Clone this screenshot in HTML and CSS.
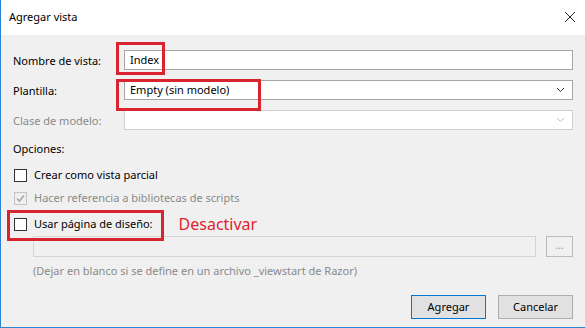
FILE: index.html
```html
<!DOCTYPE html>
<html lang="es">
<head>
    <meta charset="UTF-8">
    <title>Agregar vista</title>
    <link rel="stylesheet" href="styles.css">
</head>
<body>
    <div class="dialog">
        <div class="titlebar">
            <span class="title">Agregar vista</span>
            <svg class="close" width="12" height="12" viewBox="0 0 12 12">
                <path d="M1 1 L11 11 M11 1 L1 11" stroke="#222" stroke-width="1" fill="none"/>
            </svg>
        </div>

        <div class="content">
            <div class="field">
                <span class="label">Nombre de vista:</span>
                <div class="textbox">Index</div>
            </div>
            <div class="field">
                <span class="label">Plantilla:</span>
                <div class="combo">
                    <span>Empty (sin modelo)</span>
                    <svg class="chevron" width="9" height="6" viewBox="0 0 9 6"><path d="M1 1 L4.5 4.5 L8 1" stroke="#333" fill="none"/></svg>
                </div>
            </div>
            <div class="field disabled">
                <span class="label">Clase de modelo:</span>
                <div class="combo">
                    <span></span>
                    <svg class="chevron" width="9" height="6" viewBox="0 0 9 6"><path d="M1 1 L4.5 4.5 L8 1" stroke="#bbb" fill="none"/></svg>
                </div>
            </div>

            <div class="section">Opciones:</div>

            <div class="check first">
                <span class="box"></span>
                <span>Crear como vista parcial</span>
            </div>
            <div class="check disabled second">
                <span class="box">
                    <svg width="11" height="11" viewBox="0 0 11 11"><path d="M2 5.5 L4.5 8 L9 2.5" stroke="#a8a8a8" stroke-width="1.6" fill="none"/></svg>
                </span>
                <span>Hacer referencia a bibliotecas de scripts</span>
            </div>
            <div class="check third">
                <span class="box"></span>
                <span>Usar página de diseño:</span>
                <span class="note">Desactivar</span>
            </div>

            <div class="layout-row">
                <div class="textbox disabled"></div>
                <div class="btn browse">...</div>
            </div>
            <div class="hint">(Dejar en blanco si se define en un archivo _viewstart de Razor)</div>

            <div class="actions">
                <div class="btn default">Agregar</div>
                <div class="btn">Cancelar</div>
            </div>

            <div class="mark mark-name"></div>
            <div class="mark mark-template"></div>
            <div class="mark mark-layout"></div>
        </div>
    </div>
</body>
</html>
```

FILE: styles.css
```css
body {
    margin: 0;
    font-family: "Noto Sans", "Open Sans", sans-serif;
    font-size: 11px;
    color: #000;
}
.dialog {
    width: 585px;
    height: 328px;
    box-sizing: border-box;
    border-left: 1px solid #2a84d2;
    border-bottom: 1px solid #2a84d2;
    display: flex;
    flex-direction: column;
    overflow: hidden;
}
.titlebar {
    height: 33px;
    background: #fff;
    display: flex;
    align-items: center;
    justify-content: space-between;
    padding: 0 9px 2px 8px;
    flex-shrink: 0;
}
.content {
    position: relative;
    flex: 1;
    background: #f0f0f0;
    padding: 15px 12px 0 12px;
}
.field {
    display: grid;
    grid-template-columns: 111px 1fr;
    align-items: center;
    margin-bottom: 10px;
}
.field.disabled .label {
    color: #8a8a8a;
}
.textbox, .combo {
    height: 20px;
    box-sizing: border-box;
    background: #fff;
    border: 1px solid #a6a6a6;
    padding: 0 5px;
    line-height: 18px;
}
.combo {
    display: flex;
    align-items: center;
    justify-content: space-between;
}
.chevron {
    margin-right: 2px;
}
.field.disabled .combo {
    border-color: #cfcfcf;
}
.section {
    margin-top: 11px;
    line-height: 16px;
}
.check {
    display: flex;
    align-items: center;
    gap: 7px;
    line-height: 16px;
    padding-left: 1px;
}
.check.first { margin-top: 10px; }
.check.second { margin-top: 7px; }
.check.third { margin-top: 10px; }
.box {
    width: 13px;
    height: 13px;
    box-sizing: border-box;
    border: 1px solid #333;
    background: #fff;
    display: flex;
    align-items: center;
    justify-content: center;
}
.check.disabled {
    color: #8a8a8a;
}
.check.disabled .box {
    border-color: #c4c4c4;
    background: #f0f0f0;
}
.note {
    color: #e0242f;
    font-size: 16px;
    margin-left: 19px;
}
.layout-row {
    display: flex;
    gap: 10px;
    margin-top: 4px;
    padding-left: 20px;
}
.textbox.disabled {
    flex: 1;
    height: 21px;
    background: #f0f0f0;
    border-color: #d4d4d4;
}
.btn {
    border: 1px solid #adadad;
    background: #e1e1e1;
    text-align: center;
    box-sizing: border-box;
}
.browse {
    width: 27px;
    height: 21px;
    line-height: 17px;
    color: #9a9a9a;
    background: #f0f0f0;
    border-color: #bcbcbc;
    font-size: 10px;
}
.hint {
    margin-top: 6px;
    padding-left: 20px;
    line-height: 16px;
    color: #8a8a8a;
}
.actions {
    display: flex;
    justify-content: flex-end;
    gap: 12px;
    margin-top: 16px;
}
.actions .btn {
    width: 75px;
    height: 24px;
    line-height: 22px;
}
.btn.default {
    border-color: #0078d7;
}
.mark {
    position: absolute;
    border: 3px solid #d9232f;
    box-sizing: border-box;
}
.mark-name {
    left: 115px;
    top: 7px;
    width: 49px;
    height: 33px;
}
.mark-template {
    left: 115px;
    top: 44px;
    width: 145px;
    height: 32px;
}
.mark-layout {
    left: 6px;
    top: 175px;
    width: 157px;
    height: 31px;
}
```
